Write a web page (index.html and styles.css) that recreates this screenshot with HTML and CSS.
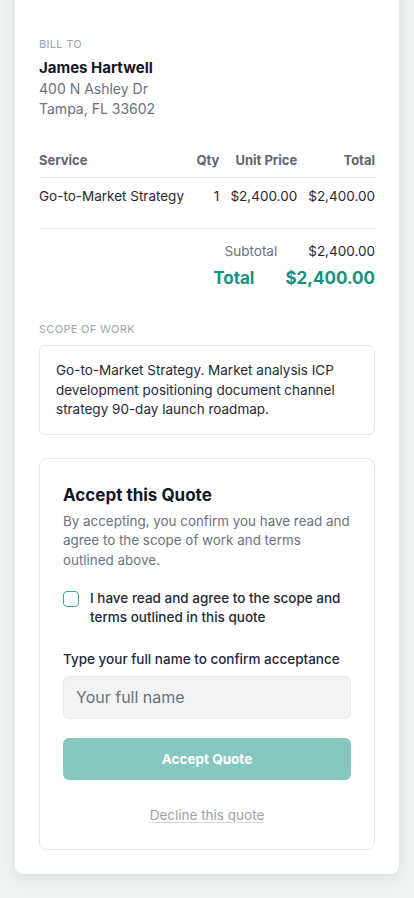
FILE: index.html
```html
<!DOCTYPE html>
<html lang="en">
<head>
    <meta charset="UTF-8">
    <title>Quote Q-1048 - Hartwell</title>
    <link rel="stylesheet" href="styles.css">
</head>
<body>
    <div class="page">
        <div class="quote-card">
            <div class="quote-head">
                <div class="quote-meta">Quote Q-1048</div>
            </div>

            <div class="bill-to">
                <div class="section-label">Bill To</div>
                <div class="client-name">James Hartwell</div>
                <div class="client-addr">400 N Ashley Dr</div>
                <div class="client-addr">Tampa, FL 33602</div>
            </div>

            <table class="items">
                <thead>
                    <tr>
                        <th class="col-service">Service</th>
                        <th class="num">Qty</th>
                        <th class="num">Unit Price</th>
                        <th class="num">Total</th>
                    </tr>
                </thead>
                <tbody>
                    <tr>
                        <td>Go-to-Market Strategy</td>
                        <td class="num">1</td>
                        <td class="num">$2,400.00</td>
                        <td class="num">$2,400.00</td>
                    </tr>
                </tbody>
            </table>

            <div class="totals">
                <div class="totals-row">
                    <span class="totals-label">Subtotal</span>
                    <span>$2,400.00</span>
                </div>
                <div class="totals-row grand">
                    <span>Total</span>
                    <span>$2,400.00</span>
                </div>
            </div>

            <div class="scope">
                <div class="section-label">Scope of Work</div>
                <div class="scope-box">
                    Go-to-Market Strategy. Market analysis ICP development positioning document channel strategy 90-day launch roadmap.
                </div>
            </div>

            <form class="accept-box" id="acceptForm">
                <h2>Accept this Quote</h2>
                <p class="accept-desc">By accepting, you confirm you have read and agree to the scope of work and terms outlined above.</p>

                <label class="agree">
                    <input type="checkbox" id="agree">
                    <span>I have read and agree to the scope and terms outlined in this quote</span>
                </label>

                <label class="name-label" for="full_name">Type your full name to confirm acceptance</label>
                <input type="text" id="full_name" class="name-input" placeholder="Your full name">

                <button type="submit" class="accept-btn" disabled>Accept Quote</button>

                <div class="decline"><a href="#">Decline this quote</a></div>
            </form>
        </div>
    </div>
</body>
</html>
```

FILE: styles.css
```css
body {
    margin: 0;
    background: #eef2f1;
    font-family: Inter, "Noto Sans", sans-serif;
    color: #1f2937;
}
.page {
    padding: 0 15px 26px;
}
.quote-card {
    margin-top: -40px;
    background: #fff;
    border-radius: 8px;
    box-shadow: 0 4px 14px rgba(0, 0, 0, 0.08);
    padding: 24px 24px 24px;
}
.quote-head {
    height: 20px;
    margin-bottom: 32px;
}
.quote-meta {
    font-size: 13px;
    line-height: 20px;
    font-weight: 600;
    color: #111827;
}
.section-label {
    font-size: 11px;
    line-height: 16px;
    text-transform: uppercase;
    letter-spacing: 0.3px;
    color: #9ca3af;
    margin-bottom: 5px;
}
.client-name {
    font-size: 15px;
    line-height: 22px;
    font-weight: 700;
    color: #111827;
}
.client-addr {
    font-size: 14px;
    line-height: 20px;
    color: #6b7280;
}
.items {
    width: 100%;
    border-collapse: collapse;
    margin-top: 24px;
    font-size: 13.5px;
}
.items th {
    text-align: left;
    font-size: 13px;
    line-height: 18px;
    font-weight: 700;
    color: #5f6673;
    padding: 8px 0 8px 10px;
    border-bottom: 1px solid #e5e7eb;
}
.items td {
    line-height: 20px;
    padding: 8px 0 12px 10px;
    color: #1f2937;
}
.items th:first-child,
.items td:first-child {
    padding-left: 0;
}
.items .num {
    text-align: right;
    white-space: nowrap;
}
.totals {
    margin-top: 10px;
    border-top: 1px solid #e5e7eb;
    padding-top: 12px;
}
.totals-row {
    display: flex;
    justify-content: flex-end;
    gap: 31px;
    font-size: 13.5px;
    line-height: 20px;
    color: #1f2937;
}
.totals-label {
    color: #6b7280;
}
.totals-row.grand {
    margin-top: 4px;
    line-height: 26px;
    font-weight: 700;
    color: #17917f;
    font-size: 17px;
}
.scope {
    margin-top: 30px;
}
.scope .section-label {
    margin-bottom: 8px;
}
.scope-box {
    border: 1px solid #e5e7eb;
    border-radius: 6px;
    padding: 15px 16px 14px;
    font-size: 13.5px;
    line-height: 19.6px;
    color: #1f2937;
}
.accept-box {
    margin-top: 23px;
    border: 1px solid #e5e7eb;
    border-radius: 8px;
    padding: 24px 23px 24px;
}
.accept-box h2 {
    margin: 0;
    font-size: 17px;
    line-height: 24px;
    font-weight: 700;
    color: #111827;
}
.accept-desc {
    margin: 5px 0 0;
    font-size: 13.4px;
    line-height: 19.5px;
    color: #6b7280;
}
.agree {
    display: flex;
    align-items: flex-start;
    gap: 11px;
    margin-top: 19px;
    font-size: 13.5px;
    line-height: 18.8px;
    font-weight: 500;
    color: #1f2937;
}
.agree input {
    appearance: none;
    flex: none;
    width: 16px;
    height: 16px;
    margin: 2px 0 0;
    border: 1.5px solid #3ea596;
    border-radius: 4px;
    box-sizing: border-box;
}
.name-label {
    display: block;
    margin-top: 22px;
    font-size: 13.5px;
    line-height: 20px;
    font-weight: 500;
    color: #1f2937;
}
.name-input {
    display: block;
    width: 100%;
    box-sizing: border-box;
    height: 43px;
    margin-top: 7px;
    padding: 0 12px;
    border: 1px solid #e7ebea;
    border-radius: 6px;
    background: #f1f4f3;
    font-family: inherit;
    font-size: 16px;
    color: #1f2937;
}
.name-input::placeholder {
    color: #6b7280;
}
.accept-btn {
    display: block;
    width: 100%;
    height: 42px;
    margin-top: 19px;
    border: none;
    border-radius: 6px;
    background: #86c8bf;
    color: #fff;
    font-family: inherit;
    font-size: 13.5px;
    font-weight: 700;
}
.decline {
    margin-top: 25px;
    text-align: center;
    font-size: 13.5px;
    line-height: 20px;
}
.decline a {
    color: #9ca3af;
    text-decoration: underline;
    text-decoration-color: #d1d5db;
    text-underline-offset: 2px;
}
```
